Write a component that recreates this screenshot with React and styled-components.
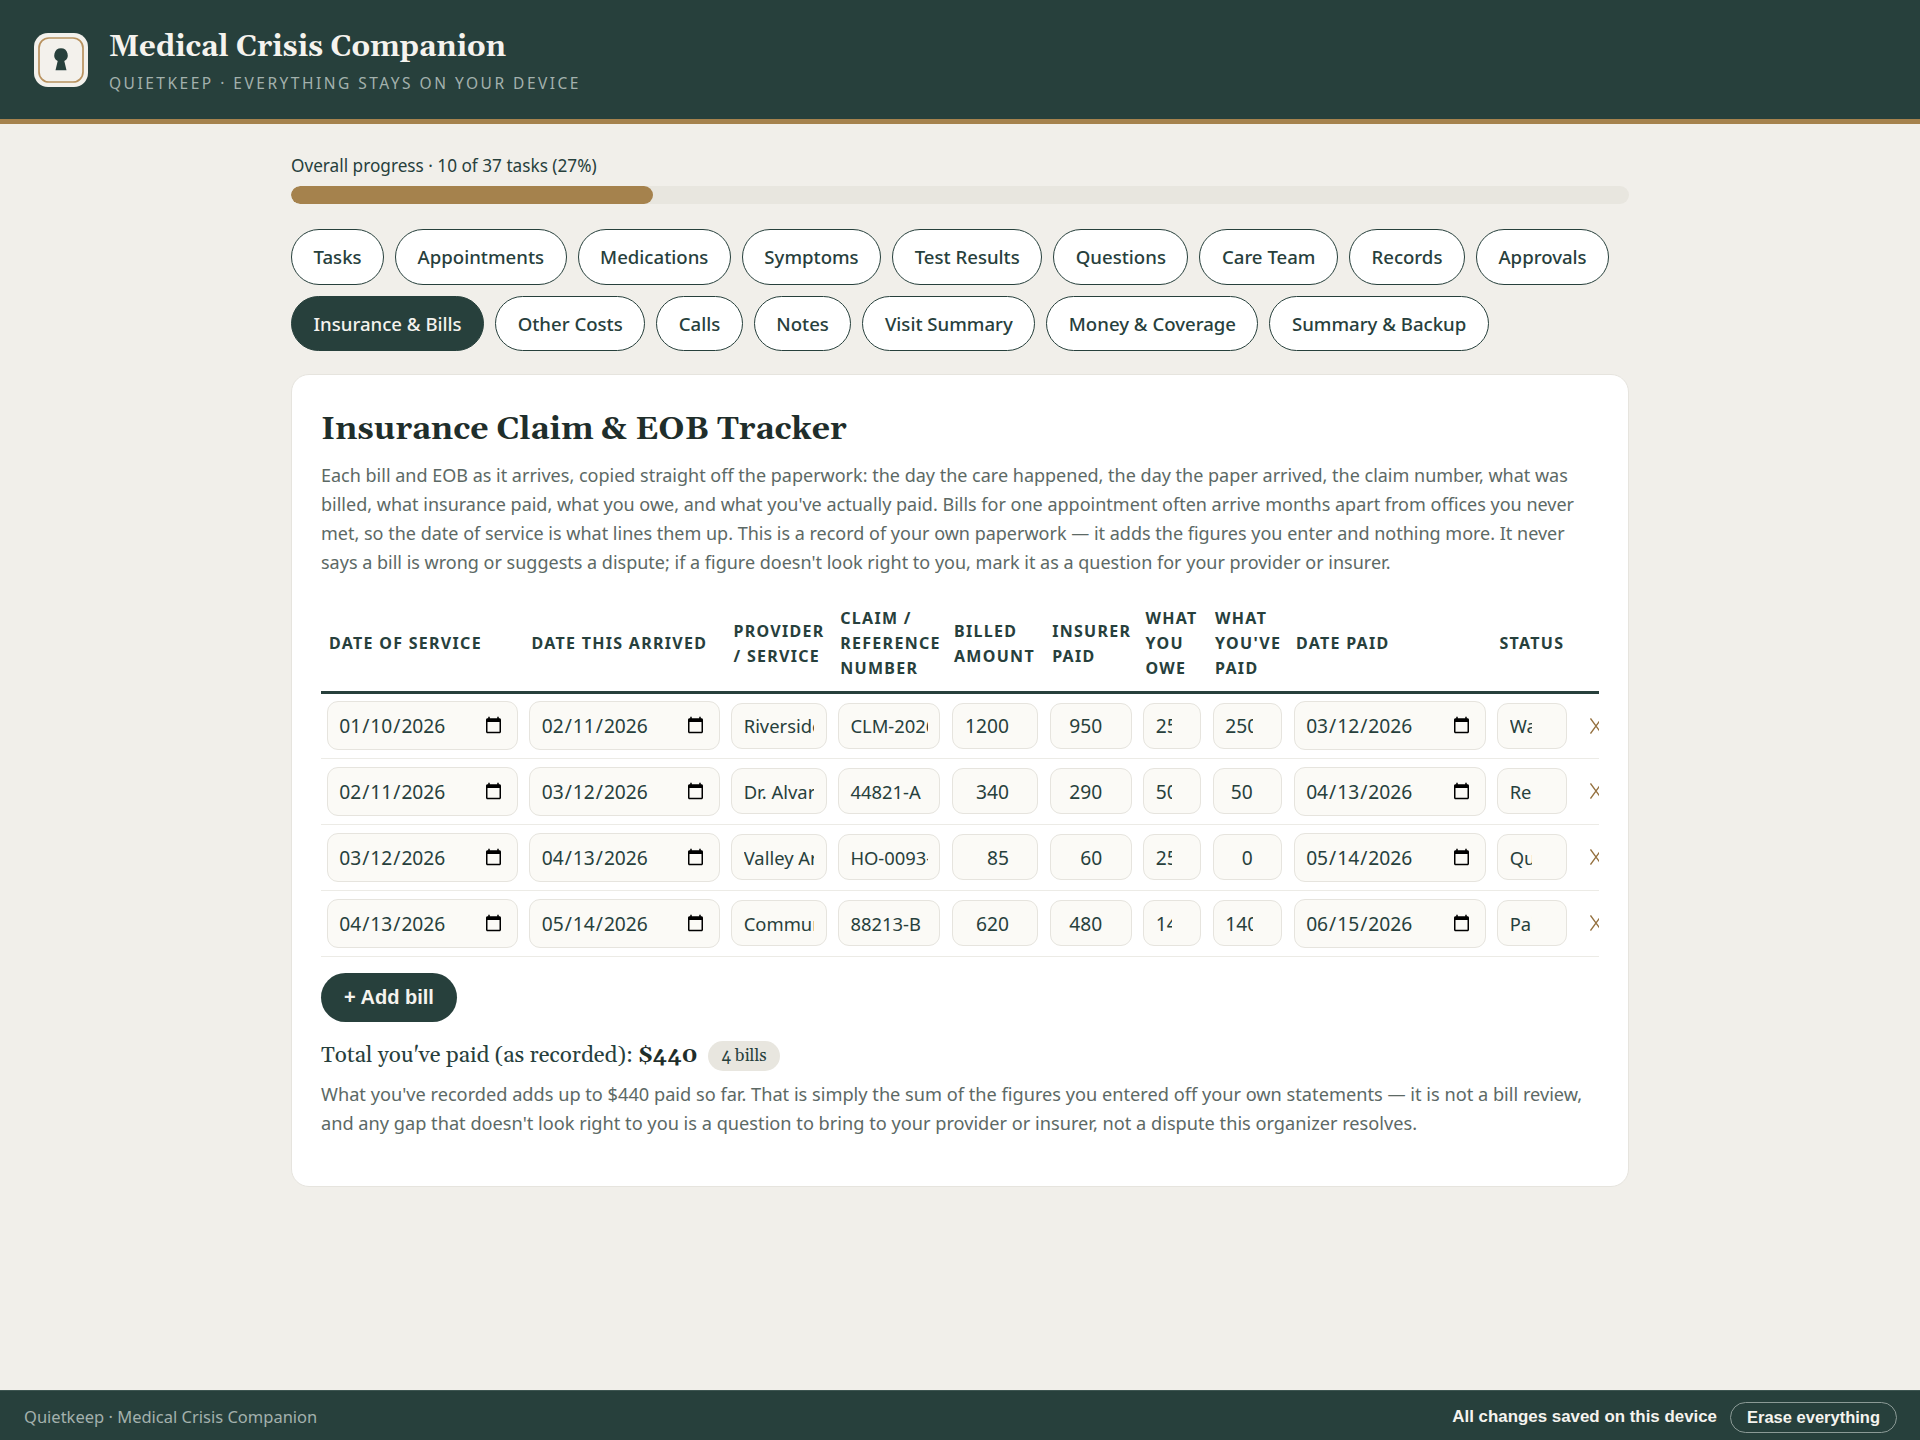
import React from "react";
import styled, { createGlobalStyle } from "styled-components";

const Global = createGlobalStyle`
  html, body { margin: 0; padding: 0; }
  body { background: #f1efea; color: #1f2e2b; font-family: "Noto Sans", sans-serif; font-size: 18px; line-height: 1.6; }
  * { box-sizing: border-box; }
`;
const serif = `Georgia, Gelasio, "Liberation Serif", serif`;
const Page = styled.div`display:flex;flex-direction:column;min-height:1440px;`;
const Header = styled.header`
  display:flex;align-items:center;gap:21px;height:124px;padding:0 34px;background:#27403c;border-bottom:5px solid #a5824d;flex:none;
`;
const Logo = styled.svg`width:54px;height:54px;flex:none;`;
const Brand = styled.div`display:flex;flex-direction:column;padding-top:4px;`;
const Title = styled.h1`margin:0;font-family:${serif};font-size:29.3px;font-weight:700;line-height:1.25;color:#f5f3ee;`;
const Sub = styled.div`margin-top:6px;font-size:15.5px;line-height:1.3;letter-spacing:2.5px;color:#a3b1ad;text-transform:uppercase;`;
const Main = styled.main`flex:1;width:1338px;margin:0 auto;padding-top:28px;`;
const ProgressLabel = styled.div`font-size:17.2px;line-height:28px;color:#27403c;`;
const Track = styled.div`height:18px;margin-top:6px;border-radius:9px;background:#e8e6df;overflow:hidden;`;
const Fill = styled.div`height:100%;border-radius:9px;background:#a5824d;`;
const Tabs = styled.nav`display:flex;flex-wrap:wrap;gap:11px;margin-top:25px;`;
const Tab = styled.button`
  height:55.5px;padding:0 21.5px;border-radius:28px;border:1.5px solid #27403c;
  background:${p => p.$active ? "#27403c" : "#fff"};color:${p => p.$active ? "#f5f3ee" : "#27403c"};
  font-family:"Noto Sans",sans-serif;font-size:18.6px;font-weight:500;
`;
const Card = styled.section`
  margin-top:23px;padding:29px 29px 49px;background:#fff;border:1px solid #e6e4de;border-radius:18px;
`;
const Heading = styled.h2`margin:0;font-family:${serif};font-size:32px;font-weight:700;line-height:1.6;color:#1f2e2b;`;
const Lead = styled.p`margin:6px 0 0;color:#5c6965;font-size:18px;line-height:28.8px;`;
const TableWrap = styled.div`margin-top:28px;overflow:hidden;`;
const Table = styled.table`border-collapse:collapse;table-layout:fixed;width:1300px;`;
const Col = styled.col`width:${p => p.$w}px;`;
const Th = styled.th`
  padding:0 8px 8px;text-align:left;vertical-align:middle;border-bottom:3px solid #27403c;
  font-size:16px;line-height:25px;font-weight:700;letter-spacing:1.3px;text-transform:uppercase;color:#27403c;height:88px;
`;
const Td = styled.td`padding:0 5.7px;height:66px;border-bottom:1.5px solid #ecebe6;vertical-align:middle;`;
const field = `
  display:block;width:100%;height:46px;padding:0 11.5px;background:#fbfaf6;border:1px solid #e6e4de;border-radius:11px;
  font-family:"Noto Sans",sans-serif;font-size:19.2px;color:#27403c;outline:none;
`;
const Input = styled.input`${field}font-size:18.4px;`;
const NumberInput = styled.input`${field}text-align:right;padding-right:13.5px;`;
const DateInput = styled.input`${field}height:49px;padding-left:10.5px;`;
const Select = styled.select`${field}appearance:none;padding-right:34px;font-size:18.4px;`;
const Remove = styled.button`
  display:block;border:0;background:none;padding:0 0 0 11.9px;margin:0;color:#94703e;line-height:0;
`;
const RemoveIcon = styled.svg`display:block;width:12px;height:16px;`;
const AddBtn = styled.button`
  display:block;margin-top:16px;height:49px;width:136px;border:0;border-radius:25px;background:#27403c;color:#f5f3ee;
  font-family:"Liberation Sans",sans-serif;font-size:20px;font-weight:700;
`;
const Total = styled.div`display:flex;align-items:center;gap:11px;margin-top:16px;font-family:${serif};font-size:22.4px;line-height:36px;color:#27403c;`;
const Amount = styled.strong`color:#1f2e2b;`;
const Badge = styled.span`display:inline-block;padding:0 13px;height:30px;line-height:30px;border-radius:15px;background:#e8e6df;font-size:17px;`;
const Note = styled.p`margin:6px 0 0;color:#5c6965;font-size:18.2px;line-height:28.8px;`;
const Footer = styled.footer`
  display:flex;align-items:center;justify-content:space-between;height:50px;padding:3px 23px 0 24px;background:#27403c;border-top:1px solid #3d5551;color:#a3b1ad;font-size:16.5px;flex:none;
`;
const Saved = styled.div`display:flex;align-items:center;gap:13px;`;
const SavedText = styled.span`font-family:"Liberation Sans",sans-serif;font-weight:700;font-size:16.9px;color:#f5f3ee;`;
const Erase = styled.button`
  height:31px;padding:0 16px;border-radius:16px;border:1px solid #8b9a96;background:transparent;color:#f5f3ee;
  font-family:"Liberation Sans",sans-serif;font-size:16.5px;font-weight:700;
`;

const tabs1 = ["Tasks","Appointments","Medications","Symptoms","Test Results","Questions","Care Team","Records","Approvals","Insurance & Bills","Other Costs","Calls","Notes","Visit Summary","Money & Coverage","Summary & Backup"];
const cols = [202.5,202,106.7,113.8,98.2,93.3,69.6,80.9,203.5,81,50];
const heads = ["Date of service","Date this arrived","Provider / service","Claim / reference number","Billed amount","Insurer paid","What you owe","What you've paid","Date paid","Status",""];
const rows = [
  ["2026-01-10","2026-02-11","Riverside Medical Group","CLM-2026-00417","1200","950","250","250","2026-03-12","Waiting"],
  ["2026-02-11","2026-03-12","Dr. Alvarez","44821-A","340","290","50","50","2026-04-13","Received"],
  ["2026-03-12","2026-04-13","Valley Area Labs","HO-0093-7","85","60","25","0","2026-05-14","Question"],
  ["2026-04-13","2026-05-14","Community Imaging","88213-B","620","480","140","140","2026-06-15","Paid"],
];

export default function App() {
  return (
    <Page>
      <Global />
      <Header>
        <Logo viewBox="0 0 54 54" aria-hidden="true">
          <rect x="0" y="0" width="54" height="54" rx="14" fill="#f3f1ec" />
          <rect x="5" y="5" width="44" height="44" rx="10" fill="none" stroke="#b8925f" strokeWidth="1.7" />
          <path d="M27 15.3a6.8 6.8 0 0 1 3.3 12.7l2.2 9.3h-11l2.2-9.3A6.8 6.8 0 0 1 27 15.3z" fill="#27403c" />
        </Logo>
        <Brand>
          <Title>Medical Crisis Companion</Title>
          <Sub>Quietkeep · Everything stays on your device</Sub>
        </Brand>
      </Header>
      <Main>
        <ProgressLabel>Overall progress · 10 of 37 tasks (27%)</ProgressLabel>
        <Track><Fill style={{ width: `${10 / 37 * 100}%` }} /></Track>
        <Tabs>
          {tabs1.map(t => <Tab key={t} $active={t === "Insurance & Bills"}>{t}</Tab>)}
        </Tabs>
        <Card>
          <Heading>Insurance Claim &amp; EOB Tracker</Heading>
          <Lead>Each bill and EOB as it arrives, copied straight off the paperwork: the day the care happened, the day the paper arrived, the claim number, what was billed, what insurance paid, what you owe, and what you've actually paid. Bills for one appointment often arrive months apart from offices you never met, so the date of service is what lines them up. This is a record of your own paperwork — it adds the figures you enter and nothing more. It never says a bill is wrong or suggests a dispute; if a figure doesn't look right to you, mark it as a question for your provider or insurer.</Lead>
          <TableWrap>
            <Table>
              <colgroup>{cols.map((w, i) => <Col key={i} $w={w} />)}</colgroup>
              <thead>
                <tr>{heads.map((h, i) => <Th key={i}>{h}</Th>)}</tr>
              </thead>
              <tbody>
                {rows.map(r => (
                  <tr key={r[0]}>
                    <Td><DateInput type="date" defaultValue={r[0]} /></Td>
                    <Td><DateInput type="date" defaultValue={r[1]} /></Td>
                    <Td><Input defaultValue={r[2]} /></Td>
                    <Td><Input defaultValue={r[3]} /></Td>
                    <Td><NumberInput type="number" defaultValue={r[4]} /></Td>
                    <Td><NumberInput type="number" defaultValue={r[5]} /></Td>
                    <Td><NumberInput type="number" defaultValue={r[6]} /></Td>
                    <Td><NumberInput type="number" defaultValue={r[7]} /></Td>
                    <Td><DateInput type="date" defaultValue={r[8]} /></Td>
                    <Td>
                      <Select defaultValue={r[9]}>
                        <option>Waiting</option><option>Received</option><option>Question</option><option>Paid</option>
                      </Select>
                    </Td>
                    <Td>
                      <Remove aria-label="Remove">
                        <RemoveIcon viewBox="0 0 12 16" aria-hidden="true">
                          <path d="M.5.5l11 15M11.5.5l-11 15" fill="none" stroke="currentColor" strokeWidth="1.3" />
                        </RemoveIcon>
                      </Remove>
                    </Td>
                  </tr>
                ))}
              </tbody>
            </Table>
          </TableWrap>
          <AddBtn>+ Add bill</AddBtn>
          <Total><span>Total you've paid (as recorded): <Amount>$440</Amount></span><Badge>4 bills</Badge></Total>
          <Note>What you've recorded adds up to $440 paid so far. That is simply the sum of the figures you entered off your own statements — it is not a bill review, and any gap that doesn't look right to you is a question to bring to your provider or insurer, not a dispute this organizer resolves.</Note>
        </Card>
      </Main>
      <Footer>
        <span>Quietkeep · Medical Crisis Companion</span>
        <Saved>
          <SavedText>All changes saved on this device</SavedText>
          <Erase>Erase everything</Erase>
        </Saved>
      </Footer>
    </Page>
  );
}
